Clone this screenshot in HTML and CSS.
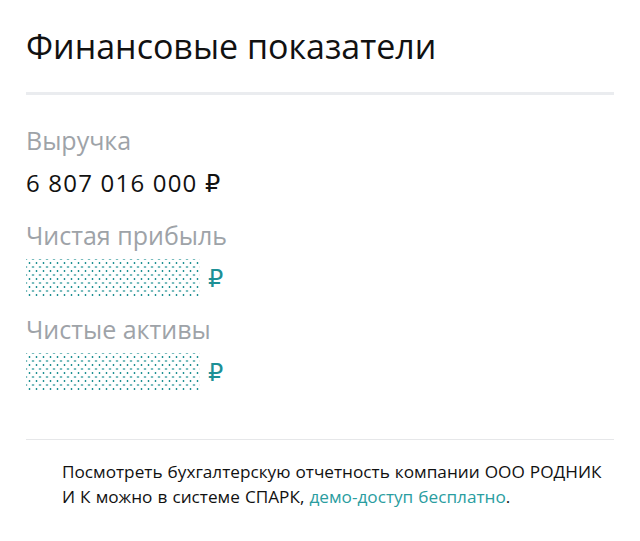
FILE: index.html
```html
<!DOCTYPE html>
<html lang="ru">
<head>
<meta charset="utf-8">
<title>Финансовые показатели</title>
<link rel="stylesheet" href="styles.css">
</head>
<body>
<section class="card">
  <h2 class="title">Финансовые показатели</h2>
  <div class="rule-thick"></div>
  <div class="metrics">
    <div class="metric">
      <div class="label">Выручка</div>
      <div class="value"><span class="num">6 807 016 000 ₽</span></div>
    </div>
    <div class="metric">
      <div class="label">Чистая прибыль</div>
      <div class="value"><span class="dots"></span><span class="rub">₽</span></div>
    </div>
    <div class="metric">
      <div class="label">Чистые активы</div>
      <div class="value"><span class="dots"></span><span class="rub">₽</span></div>
    </div>
  </div>
  <div class="rule-thin"></div>
  <p class="note">Посмотреть бухгалтерскую отчетность компании ООО РОДНИК И К можно в системе СПАРК, <a class="link" href="#">демо-доступ бесплатно</a>.</p>
</section>
</body>
</html>
```

FILE: styles.css
```css
html, body {
  margin: 0;
  padding: 0;
  background: #ffffff;
}
body {
  font-family: "Open Sans", "DejaVu Sans", sans-serif;
  color: #111111;
}
.card {
  padding: 26px 26px 0 26px;
}
.title {
  margin: 0;
  font-size: 34px;
  line-height: 40px;
  font-weight: 400;
  color: #111111;
}
.rule-thick {
  margin-top: 26px;
  height: 3px;
  background: #eaecef;
}
.metrics {
  display: flex;
  flex-direction: column;
  gap: 16.5px;
  margin-top: 30px;
}
.metric {
  display: flex;
  flex-direction: column;
  gap: 8px;
}
.label {
  font-size: 25px;
  line-height: 30px;
  color: #9ea3a8;
}
.value {
  height: 40px;
  display: flex;
  align-items: center;
  gap: 8px;
}
.num {
  font-size: 24px;
  line-height: 30px;
  letter-spacing: 1.2px;
  color: #111111;
}
.dots {
  width: 174px;
  height: 38px;
  background-image:
    radial-gradient(circle, #1f9092 0.8px, rgba(31,144,146,0) 1.2px),
    radial-gradient(circle, #1f9092 0.8px, rgba(31,144,146,0) 1.2px);
  background-size: 7px 8px;
  background-position: 0 0, 3.5px 4px;
}
.rub {
  font-size: 24px;
  line-height: 30px;
  color: #1d9096;
  font-weight: 500;
}
.rule-thin {
  margin-top: 47px;
  height: 1px;
  background: #e6e7e9;
}
.note {
  margin: 19px 6px 0 36px;
  font-size: 17.2px;
  line-height: 25px;
  word-spacing: 0.6px;
  color: #111111;
}
.link {
  color: #2a9d9f;
  text-decoration: none;
}
```
